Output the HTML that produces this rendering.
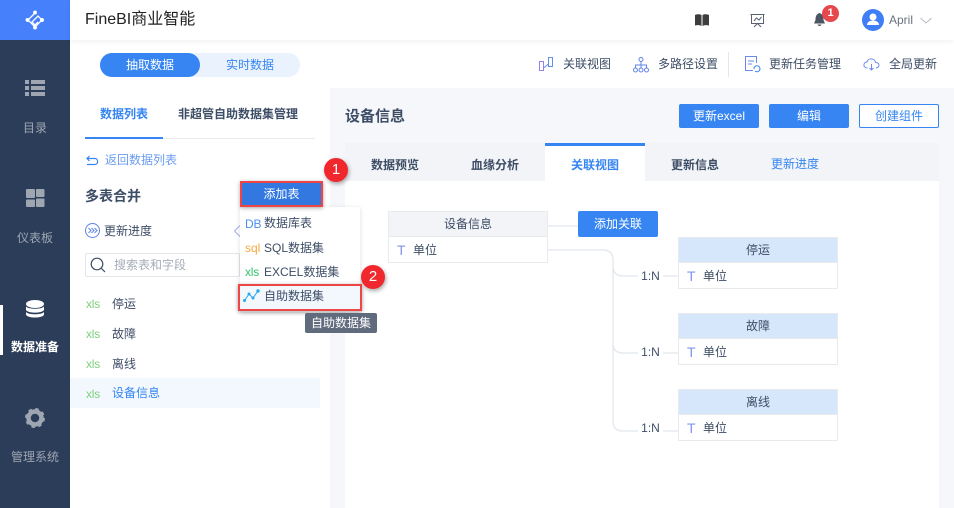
<!DOCTYPE html>
<html><head><meta charset="utf-8"><style>
*{box-sizing:border-box;margin:0;padding:0}
html,body{width:954px;height:508px;overflow:hidden;background:#fff}
body{position:relative;font:12px/16px "Liberation Sans","Noto Sans CJK SC",sans-serif;color:#3d4d66}
div,svg{position:absolute}
.t{white-space:nowrap}
.c{text-align:center}
.b{font-weight:bold}
.bl{color:#3685f2}
.side{color:#9ea6b2;width:70px;text-align:center}
.x{font-size:12px;color:#7fd07a;letter-spacing:-.2px;left:86px;width:16px}
.box{border:1px solid #e8eaed;background:#fff;width:160px;height:52px}
.hd{left:0;top:0;width:158px;height:25px;line-height:25px;text-align:center;background:#d6e6fb}
.f{left:24px;top:28px;line-height:20px}
.T{left:8px;top:28px;font-size:14px;line-height:20px;color:#7f95ec}
.r{font-size:12px;color:#3d4d66;left:638px;background:#fff;width:25px;text-align:center}
.red{border:2px solid #f04545;box-shadow:0 1px 4px rgba(0,0,0,.35)}
.n{width:24px;height:24px;border-radius:50%;background:#f0282d;color:#fff;font-size:15px;line-height:24px;text-align:center;box-shadow:1px 2px 4px rgba(0,0,0,.35)}
</style></head><body>
<div style="left:0;top:0;width:70px;height:508px;background:#2c3d59"></div>
<div style="left:0;top:0;width:70px;height:40px;background:#4680fb"></div>
<svg style="left:25px;top:10px" width="20" height="20" viewBox="0 0 20 20" fill="none" stroke="#fff" stroke-width="1.300"><path d="M10 3L3 10l7 7 7-7-4-4-6 6 3 3 3-3"/><circle cx="10" cy="2.500" r="1.300" fill="#fff"/><circle cx="2.500" cy="10" r="1.300" fill="#fff"/><circle cx="10" cy="17.500" r="1.300" fill="#fff"/><circle cx="17" cy="10" r="1.300" fill="#fff"/></svg>
<svg style="left:25px;top:80px" width="20" height="16" viewBox="0 0 20 16" fill="#9ea6b2"><rect width="4" height="4"/><rect x="6" width="14" height="4"/><rect y="6" width="4" height="4"/><rect x="6" y="6" width="14" height="4"/><rect y="12" width="4" height="4"/><rect x="6" y="12" width="14" height="4"/></svg>
<div class="t side" style="left:0;top:120px">目录</div>
<svg style="left:26px;top:189px" width="19" height="18" viewBox="0 0 19 18" fill="#9ea6b2"><rect width="9" height="9" rx="1"/><rect x="10" width="8.500" height="8" rx="1"/><rect y="10.500" width="9" height="7.500" rx="1"/><rect x="10" y="9.500" width="8.500" height="8.500" rx="1"/></svg>
<div class="t side" style="left:0;top:230px">仪表板</div>
<div style="left:0;top:305px;width:3px;height:50px;background:#fff"></div>
<svg style="left:25px;top:299px" width="20" height="20" viewBox="0 0 20 20" fill="#fff"><ellipse cx="10" cy="5" rx="9" ry="4"/><path d="M1 7.500c2 3 16 3 18 0v3.500c-2 3.500-16 3.500-18 0zM1 13c2 3 16 3 18 0v2.500c-1 4-17 4-18 0z"/></svg>
<div class="t side b" style="left:0;top:339px;color:#fff">数据准备</div>
<svg style="left:25px;top:408px" width="20" height="20" viewBox="0 0 20 20" fill="none"><circle cx="10" cy="10" r="6.500" stroke="#9ea6b2" stroke-width="4.500"/><circle cx="10" cy="10" r="9" stroke="#9ea6b2" stroke-width="2" stroke-dasharray="3.500 3.570"/></svg>
<div class="t side" style="left:0;top:449px">管理系统</div>

<div style="left:70px;top:0;width:884px;height:40px;background:#fff;box-shadow:0 1px 5px rgba(0,0,0,.07)"></div>
<div class="t" style="left:85px;top:10px;font-size:16px;line-height:20px;color:#222">FineBI商业智能</div>
<svg style="left:695px;top:14px" width="14" height="12" viewBox="0 0 14 12" fill="#3d3d3d"><path d="M0 1c2-1 5-1 6.500 0v11C5 11 2 11 0 11.500zM7.500 1c1.500-1 4.500-1 6.500 0v10.500c-2-.5-5-.5-6.500.5z"/></svg>
<svg style="left:750px;top:13px" width="15" height="15" viewBox="0 0 15 15" fill="none" stroke="#5a6270"><path d="M.5 1.500h14M1.500 1.500v9h12v-9M4 14l3.500-3.500L11 14M4 8l2.500-3 2.500 2 2.500-3"/></svg>
<svg style="left:813px;top:13px" width="13" height="14" viewBox="0 0 13 14" fill="#4b5563"><path d="M6.500 0C3 1 2.500 4 2.500 7L1 10.500h11L10.500 7c0-3-.5-6-4-7zM4.500 11.500h4c-.5 2-3.500 2-4 0z"/></svg>
<div class="t c" style="left:822px;top:5px;width:17px;height:17px;border-radius:50%;background:#e5484d;color:#fff;font-weight:bold;font-size:11px;line-height:17px">1</div>
<div style="left:862px;top:9px;width:22px;height:22px;border-radius:50%;background:#3f7ef5"></div>
<svg style="left:862px;top:9px" width="22" height="22" viewBox="0 0 22 22" fill="#fff"><circle cx="11" cy="8" r="3.500"/><path d="M5 16c0-6 12-6 12 0z"/></svg>
<div class="t" style="left:889px;top:12px;color:#69717d;font-size:12px">April</div>
<svg style="left:920px;top:17px" width="12" height="7" viewBox="0 0 12 7" fill="none" stroke="#b5bac2"><path d="M.5 1L6 6l5.500-5"/></svg>

<div style="left:100px;top:53px;width:200px;height:24px;border-radius:12px;background:#eaf2fe"></div>
<div class="t c" style="left:100px;top:53px;width:100px;height:24px;border-radius:12px;background:#3685f2;color:#fff;line-height:25px">抽取数据</div>
<div class="t c bl" style="left:200px;top:53px;width:100px;line-height:25px">实时数据</div>

<svg style="left:538px;top:56px" width="16" height="16" viewBox="0 0 16 16" fill="none" stroke="#5f8ff0"><rect x="1.500" y="5.500" width="4" height="9" stroke="#9a80ec"/><rect x="10.500" y="1.500" width="4" height="9"/><path d="M5.500 12l5-4"/></svg>
<div class="t" style="left:563px;top:56px">关联视图</div>
<svg style="left:633px;top:57px" width="16" height="16" viewBox="0 0 16 16" fill="none" stroke="#5f85e8"><circle cx="8" cy="2.500" r="2"/><circle cx="2.500" cy="13" r="2"/><circle cx="8" cy="13" r="2"/><circle cx="13.500" cy="13" r="2"/><path d="M8 4.500V11M2.500 11V8h11v3"/></svg>
<div class="t" style="left:658px;top:56px">多路径设置</div>
<div style="left:728px;top:52px;width:1px;height:25px;background:#e3e6ea"></div>
<svg style="left:744px;top:55px" width="17" height="18" viewBox="0 0 17 18" fill="none" stroke="#6a8ce8"><path d="M9 15.500H1.500v-14h11V8M4 6h6M4 9h4"/><path d="M10 14a3 3 0 1 1 1 2" stroke="#3685f2"/></svg>
<div class="t" style="left:769px;top:56px">更新任务管理</div>
<svg style="left:863px;top:57px" width="17" height="15" viewBox="0 0 17 15" fill="none" stroke="#6a8ce8"><path d="M4.500 11C-.5 11 0 5 4 5c1-4.500 8-4 8.500.5 5 0 4 5.500.5 5.500M8.500 7v6M6.500 11l2 2 2-2"/></svg>
<div class="t" style="left:889px;top:56px">全局更新</div>

<div style="left:330px;top:88px;width:624px;height:420px;background:#f5f7fa"></div>

<div class="t b bl" style="left:100px;top:106px">数据列表</div>
<div class="t b" style="left:178px;top:106px">非超管自助数据集管理</div>
<div style="left:85px;top:138px;width:230px;height:1px;background:#e8eaed"></div>
<div style="left:85px;top:137px;width:78px;height:2px;background:#3685f2"></div>
<svg style="left:86px;top:155px" width="13" height="12" viewBox="0 0 13 12" fill="none" stroke="#3685f2" stroke-width="1.200"><path d="M3.500 1L1 3.500 3.500 6M1 3.500h8c3.500 0 3.500 6 0 6H1"/></svg>
<div class="t bl" style="left:105px;top:152px;color:#6a9cf0">返回数据列表</div>
<div class="t b" style="left:85px;top:188px;font-size:14px">多表合并</div>
<svg style="left:85px;top:223px" width="15" height="15" viewBox="0 0 15 15" fill="none" stroke="#5f85e8"><circle cx="7.500" cy="7.500" r="7"/><path d="M3.500 5l2.500 2.500L3.500 10M6.500 5L9 7.500 6.500 10M9.500 5L12 7.500 9.500 10"/></svg>
<div class="t" style="left:104px;top:223px">更新进度</div>
<svg style="left:234px;top:225px" width="6" height="12" viewBox="0 0 6 12" fill="none" stroke="#a7b0f0"><path d="M6 .5L.5 6 6 11.500"/></svg>
<div style="left:85px;top:253px;width:155px;height:24px;border:1px solid #e3e6ea;border-radius:2px"></div>
<svg style="left:90px;top:257px" width="16" height="16" viewBox="0 0 16 16" fill="none" stroke="#3d4d66" stroke-width="1.200"><circle cx="7" cy="7" r="5.800"/><path d="M11.500 11.500L15 15"/></svg>
<div class="t" style="left:114px;top:257px;color:#a6adb8">搜索表和字段</div>
<div style="left:70px;top:378px;width:250px;height:30px;background:#f3f8ff"></div>
<div class="t x" style="top:296px">xls</div><div class="t" style="left:112px;top:296px">停运</div>
<div class="t x" style="top:326px">xls</div><div class="t" style="left:112px;top:326px">故障</div>
<div class="t x" style="top:356px">xls</div><div class="t" style="left:112px;top:356px">离线</div>
<div class="t x" style="top:386px">xls</div><div class="t bl" style="left:112px;top:385px">设备信息</div>

<div class="t b" style="left:345px;top:108px;font-size:15px;line-height:18px">设备信息</div>
<div class="t c" style="left:679px;top:104px;width:80px;height:24px;background:#3685f2;color:#fff;border-radius:2px;line-height:24px">更新excel</div>
<div class="t c" style="left:769px;top:104px;width:80px;height:24px;background:#3685f2;color:#fff;border-radius:2px;line-height:24px">编辑</div>
<div class="t c bl" style="left:859px;top:104px;width:80px;height:24px;border:1px solid #3685f2;border-radius:2px;line-height:22px;background:#fff">创建组件</div>

<div style="left:345px;top:143px;width:594px;height:365px;background:#fff"></div>
<div style="left:345px;top:143px;width:594px;height:38px;background:#f2f4f8"></div>
<div style="left:545px;top:143px;width:100px;height:38px;background:#fff;border-top:3px solid #3685f2"></div>
<div class="t c b" style="left:345px;top:157px;width:100px">数据预览</div>
<div class="t c b" style="left:445px;top:157px;width:100px">血缘分析</div>
<div class="t c b bl" style="left:545px;top:157px;width:100px">关联视图</div>
<div class="t c b" style="left:645px;top:157px;width:100px">更新信息</div>
<div class="t c bl" style="left:745px;top:156px;width:100px">更新进度</div>

<svg style="left:0;top:0" width="954" height="508" fill="none" stroke="#e6eaef" stroke-width="1.500"><path d="M548 226h30M548 250h55q10 0 10 10v161q0 10 10 10h55M613 266q0 10 10 10h55M613 343q0 10 10 10h55"/></svg>
<div class="box" style="left:388px;top:211px"><div class="hd" style="background:#f2f4f7;border-bottom:1px solid #e8eaed">设备信息</div><div class="T">T</div><div class="f">单位</div></div>
<div class="t c" style="left:578px;top:211px;width:80px;height:26px;background:#3685f2;color:#fff;border-radius:2px;line-height:26px">添加关联</div>
<div class="box" style="left:678px;top:237px"><div class="hd" style="border-bottom:1px solid #e8eaed">停运</div><div class="T">T</div><div class="f">单位</div></div>
<div class="box" style="left:678px;top:313px"><div class="hd" style="border-bottom:1px solid #e8eaed">故障</div><div class="T">T</div><div class="f">单位</div></div>
<div class="box" style="left:678px;top:389px"><div class="hd" style="border-bottom:1px solid #e8eaed">离线</div><div class="T">T</div><div class="f">单位</div></div>
<div class="t r" style="top:268px">1:N</div>
<div class="t r" style="top:344px">1:N</div>
<div class="t r" style="top:420px">1:N</div>

<div style="left:240px;top:207px;width:120px;height:105px;background:#fff;box-shadow:0 1px 5px rgba(0,0,0,.15);border-radius:2px"></div>
<div style="left:239px;top:285px;width:122px;height:25px;background:#f3f8ff"></div>
<div class="t" style="left:245px;top:216px;font-size:12px;letter-spacing:-.2px;color:#4f8fef">DB</div>
<div class="t" style="left:264px;top:215px">数据库表</div>
<div class="t" style="left:245px;top:240px;font-size:12px;color:#f6a93b">sql</div>
<div class="t" style="left:264px;top:240px">SQL数据集</div>
<div class="t" style="left:245px;top:264px;font-size:12px;color:#35c46b;letter-spacing:-.2px">xls</div>
<div class="t" style="left:264px;top:264px">EXCEL数据集</div>
<svg style="left:243px;top:289px" width="17" height="14" viewBox="0 0 17 14" fill="#29a8e8" stroke="#29a8e8"><path d="M1.500 11.500L6 5l4 4 5-7" fill="none"/><circle cx="1.500" cy="11.500" r="1"/><circle cx="6" cy="5" r="1"/><circle cx="10" cy="9" r="1"/><circle cx="15" cy="2" r="1.200"/></svg>
<div class="t" style="left:264px;top:288px">自助数据集</div>
<div style="left:238px;top:284px;width:124px;height:27px" class="red"></div>
<div class="t c" style="left:305px;top:313px;width:72px;height:20px;background:#606b7d;color:#fff;border-radius:2px;line-height:20px">自助数据集</div>
<div class="t c red" style="left:240px;top:181px;width:83px;height:26px;background:#3278e0;color:#fff;line-height:23px">添加表</div>
<div class="n" style="left:324px;top:158px">1</div>
<div class="n" style="left:361px;top:265px">2</div>
</body></html>
